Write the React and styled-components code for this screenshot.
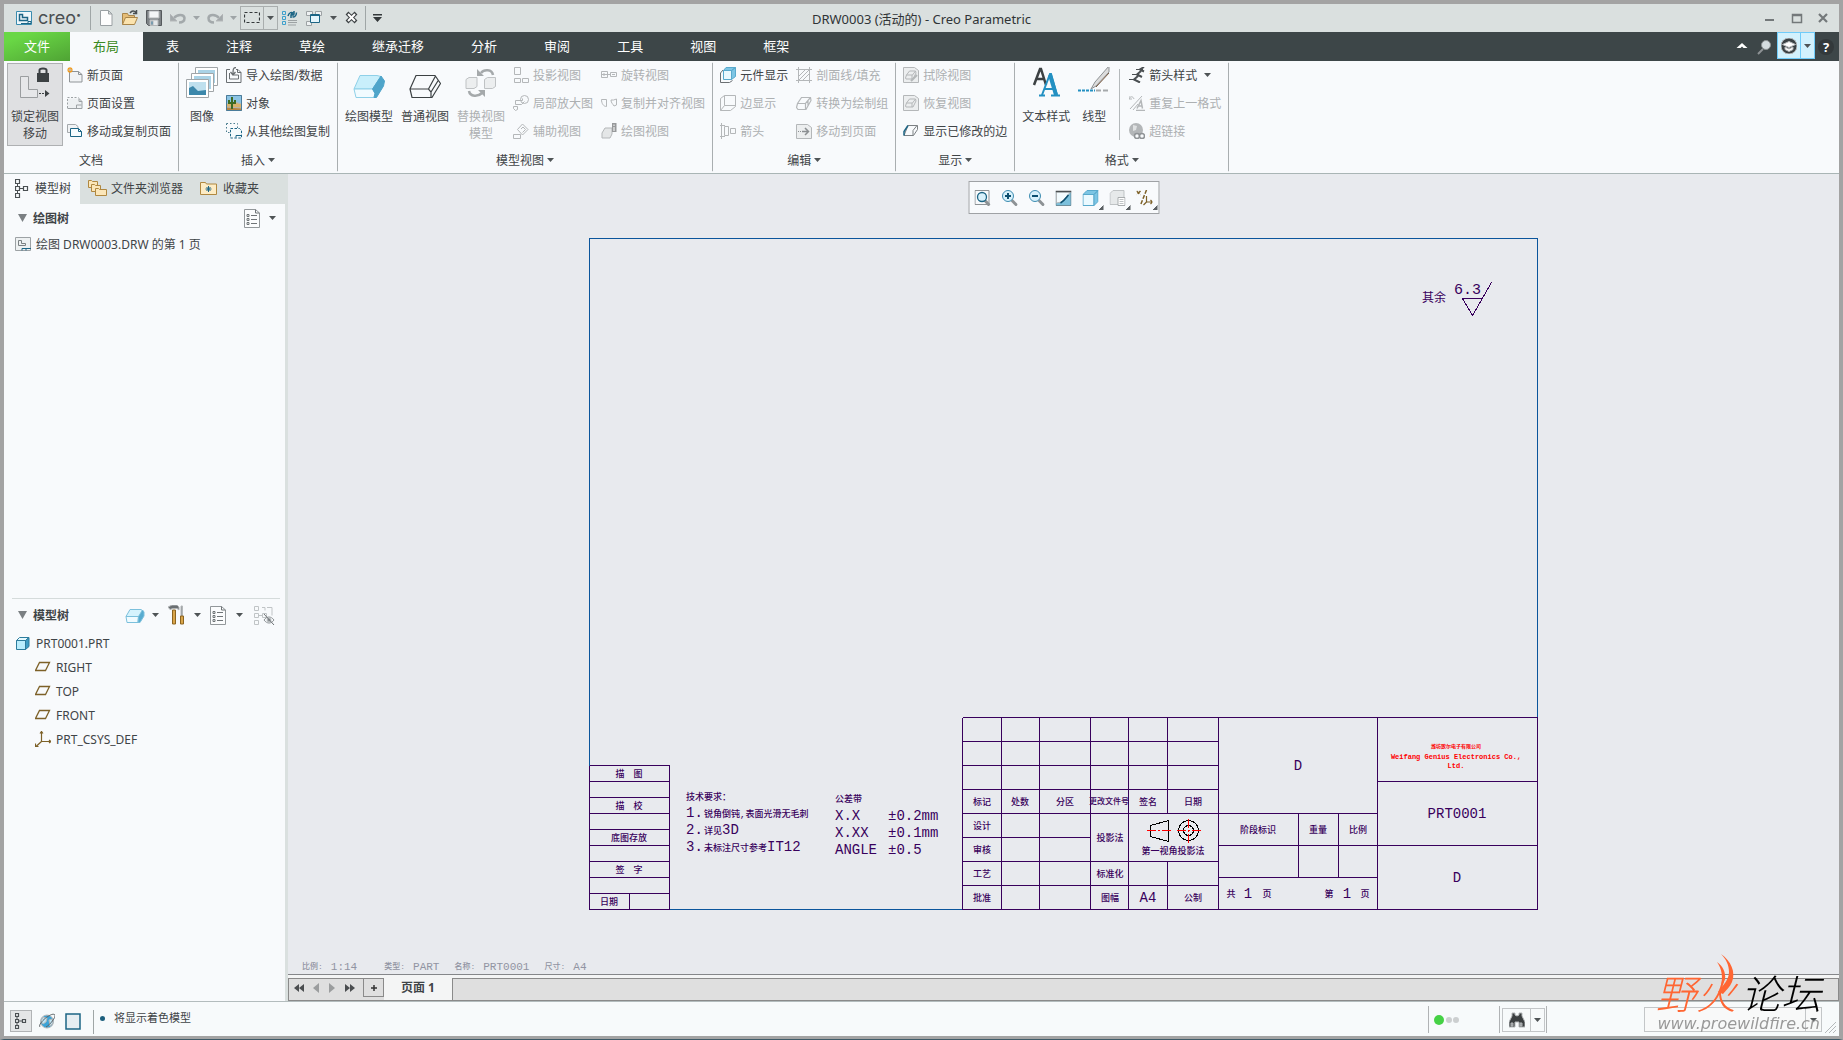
import React, { useState } from 'react';
import styled, { createGlobalStyle, css } from 'styled-components';

const GlobalStyle = createGlobalStyle`
  * {
    box-sizing: border-box;
  }
  body {
    margin: 0;
    font-family: 'Noto Sans', 'Noto Sans CJK SC', sans-serif;
    font-size: 12px;
    color: #3f4447;
  }
  button, input, select {
    font: inherit;
    color: inherit;
  }
  button {
    border: 0;
    padding: 0;
    background: none;
  }
  ul, h1, h2, p {
    margin: 0;
    padding: 0;
    list-style: none;
    font-size: inherit;
    font-weight: inherit;
  }
  svg {
    display: block;
    flex: none;
  }
`;

const Window = styled.div`
  height: 100vh;
  display: flex;
  flex-direction: column;
  border: 4px solid #a3a3a3;
  border-bottom: 1px solid #3e5a68;
  background: #f8fafc;
`;

/* ---------- title bar ---------- */

const TitleBar = styled.header`
  height: 28px;
  flex: none;
  display: grid;
  grid-template-columns: 1fr auto 1fr;
  align-items: center;
  background: #dae0df;
`;

const QuickAccess = styled.div`
  display: flex;
  align-items: center;
  padding-left: 12px;
`;

const Brand = styled.span`
  width: 47px;
  margin-left: 6px;
  font-family: Inter, sans-serif;
  font-size: 18px;
  line-height: 20px;
  color: #4a4f52;
  display: flex;

  sup {
    font-size: 9px;
    line-height: 14px;
  }
`;

const Rule = styled.span`
  width: 1px;
  height: 24px;
  background: #9fa6a6;
  margin-left: ${({ $left }) => $left || 5}px;
  margin-right: ${({ $right }) => $right || 5}px;
`;

const Tool = styled.button`
  width: ${({ $width }) => $width || 24}px;
  height: 24px;
  display: flex;
  align-items: center;
  justify-content: center;
`;

const SplitTool = styled.div`
  display: flex;
  border: 1px solid #a9aeae;

  button + button {
    border-left: 1px solid #a9aeae;
  }
  button {
    height: 22px;
  }
`;

const Title = styled.h1`
  font-size: 13px;
  color: #303436;
`;

const WindowButtons = styled.div`
  display: flex;
  justify-content: flex-end;
  padding-right: 4px;
`;

/* ---------- menu ---------- */

const MenuBar = styled.nav`
  height: 29px;
  flex: none;
  display: flex;
  background: #3d4648;
`;

const MenuTab = styled.button`
  padding: 0 24px 2px 23px;
  font-size: 13px;
  color: #fff;

  ${({ $kind }) =>
    $kind === 'file' &&
    css`
      padding: 0 20px 2px;
      background: linear-gradient(160deg, #69d745 20%, #4fa334);
    `}
  ${({ $kind }) =>
    $kind === 'active' &&
    css`
      background: #f8fafc;
      color: #3a8a22;
    `}
`;

const MenuEnd = styled.div`
  margin-left: auto;
  display: flex;
  align-items: center;
  padding-right: 2px;
`;

const Learning = styled.div`
  display: flex;
  height: 27px;
  align-self: flex-start;
  border: 1px solid #6fccfa;
  background: #d2f1fd;

  button {
    height: 25px;
  }
  button + button {
    border-left: 1px solid #6fccfa;
  }
`;

const HelpMark = styled.span`
  width: 16px;
  height: 16px;
  border-radius: 50%;
  background: #33393b;
  color: #fff;
  font-size: 13px;
  font-weight: 700;
  line-height: 16px;
`;

/* ---------- ribbon ---------- */

const Ribbon = styled.div`
  flex: none;
  height: 113px;
  display: flex;
  border-bottom: 1px solid #a9b5b5;
`;

const GroupBox = styled.section`
  padding: 0 3px;
  display: flex;
  flex-direction: column;
  border-right: 1px solid;
  border-image: linear-gradient(#f8fafc 2%, #a9aeb0 3%, #a9aeb0 97%, #f8fafc 98%) 1;
`;

const GroupBody = styled.div`
  display: flex;
  height: 85px;
`;

const GroupCaption = styled.div`
  height: 27px;
  display: flex;
  align-items: center;
  justify-content: center;
  gap: 3px;
`;

const InnerRule = styled.span`
  width: 1px;
  margin: 8px 5px 6px;
  background: #b4b9bb;
`;

const Column = styled.div`
  display: flex;
  flex-direction: column;
`;

const SmallButton = styled.button`
  height: 28px;
  padding: 0 4px;
  display: flex;
  align-items: center;
  gap: 4px;
  white-space: nowrap;
  color: ${({ disabled }) => (disabled ? '#adb0b2' : '#3f4447')};
`;

const BigButton = styled.button`
  height: 83px;
  margin-top: 2px;
  padding: 3px 3px 0;
  display: flex;
  flex-direction: column;
  align-items: center;
  gap: 9px;
  border: 1px solid ${({ $on }) => ($on ? '#aeb0b2' : 'transparent')};
  background: ${({ $on }) => ($on ? '#dfe0e2' : 'none')};
  line-height: 17px;
  white-space: pre-line;
  color: ${({ disabled }) => (disabled ? '#adb0b2' : '#3f4447')};
`;

/* ---------- main area ---------- */

const Main = styled.main`
  flex: 1;
  min-height: 0;
  display: flex;
`;

const Side = styled.aside`
  width: 284px;
  flex: none;
  display: flex;
  flex-direction: column;
  border-right: 3px solid #dae0df;
`;

const SideTabs = styled.div`
  height: 30px;
  flex: none;
  display: flex;
  margin-right: -3px;
  background: #dae0df;
`;

const SideTab = styled.button`
  display: flex;
  align-items: center;
  gap: ${({ $active }) => ($active ? 6 : 4)}px;
  padding: 0 9px 2px ${({ $active }) => ($active ? 11 : 8)}px;
  background: ${({ $active }) => ($active ? '#f8fafc' : 'none')};
`;

const Section = styled.section`
  flex: ${({ $flex }) => $flex};
  min-height: 0;
`;

const Divider = styled.div`
  height: 1px;
  flex: none;
  margin: 0 5px 0 8px;
  background: #d5dbdb;
`;

const SectionHead = styled.div`
  height: ${({ $height }) => $height}px;
  display: flex;
  align-items: center;
  padding-left: 14px;
  gap: 6px;
`;

const SectionTitle = styled.h2`
  font-weight: 700;
  flex: 1;
`;

const SectionTools = styled.div`
  display: flex;
  padding-right: ${({ $right }) => $right}px;
`;

const TreeItem = styled.li`
  height: 24px;
  display: flex;
  align-items: center;
  gap: 5px;
  padding-left: ${({ $level }) => ($level ? 31 : 11)}px;
`;

const Work = styled.div`
  flex: 1;
  min-width: 0;
  display: flex;
  flex-direction: column;
`;

const Canvas = styled.div`
  flex: 1;
  min-height: 0;
  position: relative;
  display: flex;
  align-items: center;
  justify-content: center;
  background: #e8eaee;
`;

const ViewTools = styled.div`
  position: absolute;
  top: 7px;
  left: 50%;
  transform: translateX(-50%);
  height: 33px;
  display: flex;
  align-items: center;
  border: 1px solid #9fa2a5;
  background: #f8fafc;
`;

const ViewTool = styled(Tool)`
  width: 27px;

  &:nth-child(n + 5) {
    background: linear-gradient(135deg, transparent 50%, #5b6063 50%) right 1px bottom 0 / 5px 5px no-repeat;
  }
`;

const SheetInfo = styled.p`
  position: absolute;
  left: 14px;
  bottom: 0;
  display: flex;
  gap: 15px;
  font: 11px/14px 'Liberation Mono', 'Noto Sans CJK SC', monospace;
  color: #9194a2;

  span {
    display: flex;
    gap: 8px;
  }
  span:first-child {
    padding-right: 12px;
  }
  b {
    font-size: 8px;
    font-weight: 500;
  }
`;

const Sheet = styled.svg`
  font-family: 'Liberation Mono', 'Noto Sans CJK SC', monospace;
  overflow: visible;
`;

const PageBar = styled.div`
  height: 27px;
  flex: none;
  display: flex;
  padding-top: 3px;
  border-top: 1px solid #85878a;
  background: #f4f5f5;
`;

const PageNav = styled.div`
  display: flex;
  border: 1px solid #8a8a8a;
  border-right: 0;
  background: #dfdfdf;

  button {
    height: 18px;
  }
`;

const AddPage = styled.button`
  width: 21px;
  margin-left: 4px;
  border: 1px solid #8a8a8a;
  border-top: 0;
  display: flex;
  align-items: center;
  justify-content: center;
`;

const PageTab = styled.button`
  padding: 0 17px 4px;
  border-bottom: 1px solid #8a8a8a;
  font-weight: 700;
`;

const PageFill = styled.div`
  flex: 1;
  border: 1px solid #8a8a8a;
  background: #dfdfdf;
`;

/* ---------- status bar ---------- */

const StatusBar = styled.footer`
  height: 38px;
  flex: none;
  display: flex;
  align-items: flex-start;
  padding: 8px 3px 0 6px;
  border-top: 1px solid #b3bcbd;
  border-bottom: 3px solid #a3a3a3;
  background: #f7fafb;
`;

const StatusToggle = styled.button`
  width: ${({ $on }) => ($on ? 22 : 26)}px;
  height: 22px;
  margin-right: ${({ $on }) => ($on ? 2 : 0)}px;
  display: flex;
  align-items: center;
  justify-content: center;
  border: 1px solid ${({ $on }) => ($on ? '#b0b3b5' : 'transparent')};
  background: ${({ $on }) => ($on ? '#e4e6e7' : 'none')};
`;

const Message = styled.p`
  flex: 1;
  display: flex;
  align-items: center;
  gap: 9px;
  font-size: 11px;
  line-height: 16px;

  &::before {
    content: '';
    width: 5px;
    height: 5px;
    border-radius: 50%;
    background: #1c5f7d;
  }
`;

const StatusCell = styled.div`
  height: 27px;
  margin-top: -4px;
  display: flex;
  align-items: center;
  border-left: 1px solid #b0b3b5;
  padding: 0 2px;
  width: ${({ $width }) => $width}px;
`;

const Finder = styled.div`
  display: flex;
  border: 1px solid #c3c6c8;

  button {
    height: 22px;
  }
  button + button {
    border-left: 1px solid #c3c6c8;
  }
`;

const FilterWrap = styled.label`
  width: 178px;
  height: 25px;
  margin-top: -3px;
  display: flex;
  align-items: center;
  border: 1px solid #c3c6c8;
  background: #f8f9f9;

  select {
    flex: 1;
    height: 100%;
    appearance: none;
    border: 0;
    border-right: 1px solid #c3c6c8;
    background: none;
  }
  svg {
    margin: 0 4px;
  }
`;

const Grip = styled.svg`
  align-self: flex-end;
  margin: 0 0 3px 3px;
`;

const Watermark = styled.div`
  position: fixed;
  right: 22px;
  bottom: 8px;
  display: flex;
  flex-direction: column;
  align-items: flex-end;
  pointer-events: none;
`;

const WatermarkName = styled.div`
  display: flex;
  gap: 5px;
  font-family: 'Noto Sans CJK SC', sans-serif;
  font-size: 40px;
  font-weight: 300;
  line-height: 46px;
  font-style: italic;
  color: #000;

  span {
    position: relative;
    color: #ff6633;
  }
  svg {
    position: absolute;
    right: -1px;
    top: -15px;
  }
`;

const WatermarkUrl = styled.div`
  font: italic 16px/17px 'DejaVu Sans', sans-serif;
  color: #999;
  padding-right: 1px;
`;

/* ---------- icons ---------- */

const G = '#b4b7b9';
const D = '#4a4f52';
const B = '#1c6585';

const shapes = {
  app: (
    <g fill="none" stroke={B}>
      <path d="M.5 1.500h15v13h-15z" fill="#eef7fb" stroke="#3b8cae" />
      <path d="M3.500 4.500v6h8v-3h-5v-3z" strokeWidth="1.500" />
      <path d="M5 13.500h10v-2h-3v2" stroke={B} />
    </g>
  ),
  newFile: <path d="M2.500 .5h8l3.500 3.500v11.500h-11.500zM10.500 .5v3.500h3.500" fill="#fdfdfd" stroke="#9aa0a3" />,
  open: (
    <g>
      <path d="M.5 14.500v-11h5l1 2h6v2" fill="#e5bd77" stroke="#a8854a" />
      <path d="M.5 14.500l3-7h12l-3 7z" fill="#fbe3ae" stroke="#a8854a" />
      <path d="M8 3c2-2.500 4-2.500 6-.5M14.500 0v3.500h-3.500" fill="none" stroke={D} strokeWidth="1.500" />
    </g>
  ),
  save: (
    <g>
      <path d="M.5 .5h15v15h-13l-2-2z" fill="#7d8285" stroke="#55595c" />
      <path d="M3 1h10v7h-10z" fill="#f3f5f6" />
      <path d="M4 10h8v5.500h-8z" fill="#e4e7e9" />
      <path d="M5 11h2v4h-2z" fill="#3c81a6" />
    </g>
  ),
  undo: (
    <g>
      <path d="M4 8c3-4 10-4 10.500 0 0 3-2 4.500-5.500 4.500" fill="none" stroke="#a3a9ab" strokeWidth="2.500" />
      <path d="M0 4v7h7z" fill="#a3a9ab" />
    </g>
  ),
  redo: (
    <g>
      <path d="M12 8c-3-4-10-4-10.500 0 0 3 2 4.500 5.500 4.500" fill="none" stroke="#a3a9ab" strokeWidth="2.500" />
      <path d="M16 4v7h-7z" fill="#a3a9ab" />
    </g>
  ),
  marquee: <path d="M.5 2.500h15v10h-15z" fill="none" stroke="#33383a" strokeWidth="1.200" strokeDasharray="3 2" />,
  regen: (
    <g fill="none">
      <path d="M.5 1.500h3v3h-3zM.5 6.500h3v3h-3zM.5 11.500h3v3h-3z" stroke="#3fa0cc" />
      <path d="M6 10.500h9M6 12.500h9M6 15h8" stroke="#9da2a4" />
      <path d="M6 6c1-4 4-4 5-3M12 1v3h-3M14.500 2.500c0 4-3 5-4 4M9 8v-3h3" stroke={B} strokeWidth="1.500" />
    </g>
  ),
  windows: (
    <g stroke="#9da2a4" fill="#eef1f2">
      <path d="M.5 1.500h6v4h-6zM9.500 1.500h6v4h-6zM.5 11.500h5v4h-5z" />
      <path d="M4.500 4.500h9v8h-9z" fill="#e5f5fc" stroke={B} />
      <path d="M4 5.500h10" stroke={B} />
    </g>
  ),
  closeWin: (
    <g fill="none">
      <path d="M3 3l9 9M12 3l-9 9" stroke="#3c4143" strokeWidth="4" />
      <path d="M4 4l7 7M11 4l-7 7" stroke="#fff" strokeWidth="2" />
    </g>
  ),
  customize: <path d="M4 4h9v1.500h-9zM4 7h9l-4.500 5z" fill="#33383a" />,
  min: <path d="M3 9h9v2h-9z" fill="#73787a" />,
  max: <path d="M3.500 4.500h9v8h-9zM3 5.500h10" fill="none" stroke="#73787a" strokeWidth="1.500" />,
  close: <path d="M4 4l8 8M12 4l-8 8" stroke="#73787a" strokeWidth="2.200" />,
  up: <path d="M2.500 9l5.500-5 5.500 5h-4l-1.500-1.500-1.500 1.500z" fill="#fff" />,
  find: (
    <g>
      <path d="M6 10l-5 5" stroke="#8d9294" strokeWidth="2" />
      <circle cx="9" cy="6" r="4.500" fill="#d4dcdf" stroke="#8d9294" />
    </g>
  ),
  learn: (
    <g>
      <circle cx="8" cy="8" r="8" fill="#3a4144" />
      <path d="M1.500 6.500l6.500-3 6.500 3-6.500 3z" fill="#fff" />
      <path d="M4 9l4 2 4-2v2.500l-4 2-4-2z" fill="#fff" />
    </g>
  ),
  newSheet: (
    <g>
      <path d="M2.500 4.500h9l3.500 3v7.500h-12.500z" fill="#f1f3f5" stroke="#8f9497" />
      <path d="M11.500 4.500v3h3.500" fill="none" stroke="#8f9497" />
      <path d="M3 0v6M0 3h6M1 1l4 4M5 1l-4 4" stroke="#ef9a1f" strokeWidth="1.200" />
      <path d="M2.500 2.500h1v1h-1z" fill="#fff" />
    </g>
  ),
  sheetSetup: (
    <g fill="none" stroke="#9da2a5">
      <path d="M4 3.500h8l3 3v7.500h-14.500v-10" fill="#edf0f2" stroke="none" />
      <path d="M.5 4v10M.5 2.500h11" strokeDasharray="2 1.500" />
      <path d="M.5 13.500h14.500v-7l-3-3v3h3M9.500 13v-3h5" />
    </g>
  ),
  copySheet: (
    <g>
      <path d="M.5 1.500h8l2.500 2v6h-10.500z" fill="#f1f3f5" stroke="#a4a9ac" />
      <path d="M3.500 5.500h8l3 3v5h-11z" fill="#f6fcff" stroke={B} />
      <path d="M11.500 5.500v3h3" fill="none" stroke={B} />
    </g>
  ),
  importDrawing: (
    <g fill="none" stroke="#6a6f72">
      <path d="M4 2.500h-3.500v13h14.500v-10l-3-3h-2M11.500 2.500v3h3.500" />
      <path d="M3.500 6v6h9v-4h-5" />
      <path d="M10 .5c-3 0-3 2-3 7M4.500 5l2.500 3 2.500-3" strokeWidth="1.300" />
    </g>
  ),
  object: (
    <g>
      <path d="M0 0h16v10h-16z" fill="#8cc4e4" />
      <path d="M0 9l8-2 8 2v7h-16z" fill="#d9b36c" />
      <path d="M0 12l16 1v3h-16z" fill="#b8863f" />
      <path d="M6 14v-12M3 5v3h3M9 5v3h-3" fill="none" stroke="#3e6b23" strokeWidth="2" />
      <path d="M.5 .5h15v15h-15z" fill="none" stroke="#4a7c9b" />
    </g>
  ),
  copyOther: (
    <g fill="none">
      <path d="M.5 .5h11v9h-11z" stroke="#4a7c8f" strokeDasharray="1.500 2" />
      <path d="M4.500 5.500h9l2 2v7.500h-11z" fill="#f3fafd" stroke={B} strokeDasharray="2.500 1.500" />
      <path d="M10 14.500v-2h5" stroke={B} />
    </g>
  ),
  projView: <path d="M1.500 .5h6v7h-6zM1.500 11.500h6v4h-6zM9.500 11.500h6v4h-6z" />,
  detailView: (
    <g>
      <circle cx="11.500" cy="4.500" r="4" />
      <path d="M2.500 5.500h7v-2M2.500 5.500v4h6l3-3M.5 11.500h4v3l-2 1-2-2z" />
    </g>
  ),
  auxView: <path d="M4.500 6.500l5-5.500 5.500 5.500-5.500 5.500zM8 6l2-2 2.500 2.500-3 3M.5 11.500h7v4h-7z" />,
  rotView: <path d="M.5 4.500h6v6h-6zM3 6v3M0 7.500h9M9.500 5.500h6v4h-6zM11 7.500h3" />,
  copyAlign: <path d="M.5 4.500h5v7c-3 0-5-3-5-7zM10 5c0 3 2 4 3 6l2.500-1v-6l-3 1z" />,
  drawView: (
    <g>
      <path d="M1 10l3-5h7v6l-2 4h-8z" fill="#e4e6e7" />
      <path d="M11 0h4.500v9h-4.500z" fill="#97999b" stroke="none" />
      <path d="M13 1.500v1.500M13 4v4" stroke="#fff" />
    </g>
  ),
  compShow: (
    <g>
      <path d="M3 3l-2.500 3v9.500h9l3-2" fill="none" stroke="#6a6f72" />
      <path d="M3.500 3.500h8v9h-8z" fill="#e9f8fe" stroke="#58a9cc" />
      <path d="M3.500 3.500l2.500-3h9.500l-4 3zM11.500 3.500l4-3v9l-4 3z" fill="#7cc5e4" stroke="#58a9cc" />
    </g>
  ),
  edgeShow: <path d="M.5 3.500v12h10l5-4v-11h-11zM4.500 .5v10h11M4.500 10.500l-4 5" />,
  arrows: <path d="M1.500 0v16M0 2.500h5M0 13.500h5M4.500 3.500h4v9h-4zM10.500 5.500h5v5h-5z" />,
  hatch: <path d="M2.500 0v16M13.500 0v16M0 2.500h16M0 13.500h16M3 9l6-6M3 13l10-10M7 13l6-6" />,
  toDraft: <path d="M.5 12.500l1-4 4-6h9l.5 3-5 9h-8zM1.500 8.500h8l5-6M9.500 8.500v5.500M12 6v5" strokeWidth="1.200" />,
  moveSheet: (
    <g>
      <path d="M.5 1.500h11l4 3v11h-15z" fill="#eceeef" />
      <path d="M2 8.500h4" stroke="#8b8f92" strokeDasharray="1 1" />
      <path d="M6 8.500h6M9 5l3.500 3.500-3.500 3.500" stroke="#8b8f92" strokeWidth="1.500" />
    </g>
  ),
  eraseView: (
    <g>
      <path d="M.5 .5h11l4 3v12h-15z" fill="#eceeef" />
      <path d="M2.500 11l1-3 3-4h6l.5 2-3 6h-7zM3.500 8h6l3-4M9 8v4" />
      <path d="M8 14l6-6" strokeWidth="2" />
    </g>
  ),
  resumeView: (
    <g>
      <path d="M.5 .5h11l4 3v12h-15z" fill="#eceeef" />
      <path d="M2.500 11l1-3 3-4h6l.5 2-3 6h-7zM3.500 8h6l3-4M9 8v4" />
    </g>
  ),
  modEdges: (
    <g fill="none">
      <path d="M5 2.500h9.500v4l-4 6h-9.500zM10 12.500v-5l4-5" stroke="#7b8083" />
      <path d="M5 2.500l-4 6v4" stroke={B} strokeWidth="1.500" />
    </g>
  ),
  arrowStyle: (
    <g fill="none" stroke={D}>
      <path d="M0 12.500h7M3 7.500h7M7 2.500h7" strokeWidth="1.200" />
      <path d="M9 9l-4 3.500 6 3M12 4l-4 3.500 5 2.500M15 0l-4 2.500 4 2" strokeWidth="2" />
    </g>
  ),
  repeat: (
    <g>
      <path d="M0 4c1-3 4-3 5 0M0 1v3h3M1 14l12-13M4 15l5-6" />
      <path d="M8 13.500l4-8 1.500 8M9 11h4M7 15.500h9" strokeWidth="1.500" />
    </g>
  ),
  link: (
    <g fill="#b3b6b8" stroke="none">
      <circle cx="7" cy="7" r="7" />
      <path d="M4 2l4 1-1 4-3 1z" fill="#dfe1e2" />
      <circle cx="8" cy="13" r="2.500" fill="#f8fafc" stroke="#8f9396" strokeWidth="1.500" />
      <circle cx="13" cy="13" r="2.500" fill="#f8fafc" stroke="#8f9396" strokeWidth="1.500" />
    </g>
  ),
  treeTab: (
    <g fill="none" stroke={D}>
      <path d="M.5 .5h4v4h-4zM.5 7.500h4v4h-4zM.5 14.500h4v4h-4zM8.500 7.500h4v4h-4z" strokeWidth="1.200" />
      <path d="M5 9.500h3M2.500 5v2M2.500 12v2" />
    </g>
  ),
  navigator: (
    <g fill="none" stroke={D}>
      <path d="M.5 .5h3v3h-3zM.5 6.500h3v3h-3zM.5 12.500h3v3h-3zM7.500 6.500h3v3h-3z" strokeWidth="1.200" />
      <path d="M4 8h3M2 4v2M2 10v2" />
    </g>
  ),
  folders: (
    <g stroke="#b08840" fill="#fbe6b9">
      <path d="M.5 8.500v-7h3l1 1h5v6z" />
      <path d="M3.500 12.500v-7h3l1 1h5v6z" />
      <path d="M7.500 16.500v-7h3l1 1h7v6z" />
    </g>
  ),
  favorites: (
    <g>
      <path d="M.5 14.500v-12h5l1 1.500h10v10.500z" fill="#fdecc5" stroke="#b08840" />
      <path d="M8.500 6v6M5.500 9h6M6.500 7l4 4M10.500 7l-4 4" stroke={B} />
    </g>
  ),
  list: (
    <g fill="none" stroke="#6f7477">
      <path d="M.5 .5h11l4 3.500v14.500h-15z" fill="#fbfcfd" stroke="#92979a" />
      <path d="M11.500 .5v3.500h4" />
      <path d="M7 6.500h6M7 10.500h6M7 14.500h6" />
      <path d="M3 5.500h2v2h-2zM3 9.500h2v2h-2zM3 13.500h2v2h-2z" />
    </g>
  ),
  drawing: (
    <g fill="none">
      <path d="M.5 1.500h15v13h-15z" fill="#eef1f2" stroke="#9da2a5" />
      <path d="M3.500 4.500v5h7v-2h-4v-3z" stroke="#7b8083" />
      <path d="M7 14.500v-2h9M11 12.500v2" stroke={B} />
    </g>
  ),
  block: (
    <g stroke="#7cc0dc">
      <path d="M1 9.500l4-7h11l2 1.500-4 5.500z" fill="#d5f3fd" />
      <path d="M1 9.500h12.500l-.5 6h-11z" fill="#f0fbff" />
      <path d="M13.500 9.500l4-6.500 1.500 2v4l-4 6.500h-2z" fill="#58acd0" />
    </g>
  ),
  tools: (
    <g>
      <path d="M0 2l4-2h5l2 2v3l-2-1.500h-4l-3 1z" fill="#6a6f72" />
      <path d="M4.500 5h3v14h-3z" fill="#d9a54a" stroke="#8c6420" />
      <path d="M13 1h1.500v10h-1.500z" fill="#8d9295" />
      <path d="M12.500 11h3v8h-3z" fill="#d9a54a" stroke="#8c6420" />
    </g>
  ),
  hideTree: (
    <g fill="none" stroke="#c0c4c6">
      <path d="M.5 1.500h4v4h-4zM.5 8.500h4v4h-4zM.5 15.500h4v4h-4zM8.500 8.500h4v4h-4zM5 10.500h4M8 2.500h3v3M13 2.500h5v8" />
      <path d="M10 15c3-4 7-4 10 0-3 4-7 4-10 0z" stroke="#8d9295" />
      <circle cx="15" cy="15" r="2" fill="#8d9295" />
      <path d="M10 9l10 11" stroke="#6f7477" />
    </g>
  ),
  part: (
    <g stroke="#2d7c9d">
      <path d="M1.500 5.500h9v9h-9z" fill="#b9edfd" />
      <path d="M1.500 5.500l3-3h9.500l-3.500 3z" fill="#e4f9ff" />
      <path d="M10.500 5.500l3.500-3v9l-3.500 3z" fill="#3d9cc4" />
    </g>
  ),
  plane: <path d="M4.500 3.500h10l-4 8h-10z" fill="none" stroke="#7d6128" strokeWidth="1.300" />,
  csys: (
    <g fill="none" stroke="#7d6128" strokeWidth="1.200">
      <path d="M6.500 1v9.500h9M6.500 10.500l-5.500 5" />
      <path d="M5 2.500l1.500-2 1.500 2M14 9l2 1.500-2 1.500M.5 12.500v3h3" />
    </g>
  ),
  zoomFit: (
    <g fill="none">
      <path d="M.5 .5h14v14h-14z" stroke="#8d9295" />
      <path d="M10 10l5 5.500" stroke="#8d9295" strokeWidth="3" />
      <circle cx="7.500" cy="7" r="4.500" fill="#d8f1fb" stroke={B} strokeWidth="1.300" />
    </g>
  ),
  zoomIn: (
    <g fill="none">
      <path d="M10 10l5.500 5.500" stroke="#8d9295" strokeWidth="3" />
      <circle cx="6.500" cy="6" r="5.500" fill="#d8f1fb" stroke="#3c8bb0" />
      <path d="M3.500 6h6M6.500 3v6" stroke="#0b4f70" strokeWidth="2" />
    </g>
  ),
  zoomOut: (
    <g fill="none">
      <path d="M10 10l5.500 5.500" stroke="#8d9295" strokeWidth="3" />
      <circle cx="6.500" cy="6" r="5.500" fill="#d8f1fb" stroke="#3c8bb0" />
      <path d="M3.500 6h6" stroke="#0b4f70" strokeWidth="2" />
    </g>
  ),
  repaint: (
    <g>
      <path d="M.5 1.500h15v14h-15z" fill="#7cc0dc" stroke="#6f8f9c" />
      <path d="M1 2h14l-9 10-5 1z" fill="#f3fbfe" />
      <path d="M0 1.500h16" stroke={D} strokeWidth="1.500" />
      <path d="M13 5c-2 2-3 5-8 8" fill="none" stroke="#0b4f70" strokeWidth="1.500" />
    </g>
  ),
  shaded: (
    <g>
      <path d="M.5 4.500h11v11h-11z" fill="#eaf9ff" stroke="#58a9cc" />
      <path d="M.5 4.500l4-4h11l-4 4zM11.500 4.500l4-4v11l-4 4z" fill="#7cc5e4" stroke="#58a9cc" />
    </g>
  ),
  savedViews: (
    <g stroke="#bfc3c5" fill="#e6e9ea">
      <path d="M.5 3.500l3-3h11v10l-4 4h-10z" />
      <path d="M8.500 7.500h7v8h-7z" fill="#fff" stroke="#a9adaf" />
      <path d="M10 9.500h4M10 11.500h4M10 13.500h4" />
    </g>
  ),
  datum: (
    <g fill="none" stroke="#7d6128" strokeWidth="1.500">
      <path d="M0 1l4 4M4 1l-4 4M10 0l-6 15" strokeDasharray="4 1.500" />
      <path d="M10 6v6h6M10 12l-3 3M14 10l2 2-2 2" strokeWidth="1.200" />
    </g>
  ),
  first: <path d="M8 4v8l-5-4zM13 4v8l-5-4z" fill="#4a4d4f" />,
  prev: <path d="M11 3v10l-6-5z" fill="#9b9d9e" />,
  next: <path d="M5 3v10l6-5z" fill="#9b9d9e" />,
  last: <path d="M3 4v8l5-4zM8 4v8l5-4z" fill="#4a4d4f" />,
  plus: <path d="M8 5v6M5 8h6" stroke="#333" strokeWidth="1.500" />,
  web: (
    <g>
      <circle cx="8" cy="8.500" r="6.500" fill="#3ba4d8" />
      <path d="M4 4l4 1-1 4-3 2-2-3zM10 7l3-1 1 4-3 3z" fill="#bfe6f6" />
      <path d="M1 14c-3-3 12-16 15-12 1 2-5 10-9 12" fill="none" stroke="#5e6467" />
    </g>
  ),
  fullscreen: <path d="M1 1h14v15h-14z" fill="#e6eef2" stroke={B} strokeWidth="1.500" />,
  binoculars: (
    <g>
      <path d="M3 1h3v2l2 1 2-1v-2h3v3l3 6v5h-6v-5h-4v5h-6v-5l3-6z" fill="#3b3f41" />
      <path d="M2 11h2v3h-2zM11 11h2v3h-2z" fill="#8d9295" />
    </g>
  ),
};

const Icon = ({ name, w = 16, h = 16 }) => (
  <svg width={w} height={h} viewBox={`0 0 ${w} ${h}`} fill="none" stroke={shapes[name].type === 'path' && shapes[name].props.fill ? 'none' : G} aria-hidden="true">
    {shapes[name]}
  </svg>
);

const Caret = ({ color = '#4f5456' }) => (
  <svg width="7" height="4" viewBox="0 0 7 4" aria-hidden="true">
    <path d="M0 0h7l-3.500 4z" fill={color} />
  </svg>
);

const bigShapes = {
  lock: (
    <g fill="none">
      <path d="M1.500 9.500h8v13h9v8h-17z" fill="#e6e7e9" stroke="#9b9ea0" />
      <path d="M18 6h12v9h-12z" fill="#3c4143" />
      <path d="M20.500 6v-3c0-2 7-2 7 0v3" stroke="#3c4143" strokeWidth="2" />
      <path d="M20 26.500h7" stroke="#3c4143" strokeDasharray="2 1" />
      <path d="M26 23l4.500 3.500-4.500 3.500z" fill="#3c4143" />
    </g>
  ),
  images: (
    <g stroke="#a0a5a8">
      <path d="M9.500 .5h22v18h-22z" fill="#fff" />
      <path d="M12 3h17v13h-17z" fill="#a9d2e6" stroke="none" />
      <path d="M5.500 6.500h22v18h-22z" fill="#fff" />
      <path d="M8 9h17v13h-17z" fill="#a9d2e6" stroke="none" />
      <path d="M.5 12.500h22v18h-22z" fill="#fff" />
      <path d="M3 15h17v13h-17z" fill="#bfe0ee" stroke="none" />
      <path d="M3 21l4-2 5 5 8-1v5h-17z" fill="#3d88ab" stroke="none" />
    </g>
  ),
  model: (
    <g stroke="#8fd0e8">
      <path d="M1 22l6-13.500h17l4 1-8.500 12.500z" fill="#c9effb" />
      <path d="M1 22h18.500l2.500 4-1 4.500h-18z" fill="#f1fbff" />
      <path d="M19.500 22l8.500-13 3.500 5-1 5-7 11.500h-2.500l1-4z" fill="#4fa5ca" stroke="#4fa5ca" />
    </g>
  ),
  general: (
    <path
      d="M1 22l6-13.500h19l5.500 8-8.500 14h-20zM1 22h18.500l2.500 3v5M19.500 22l7-13M22 25l7.500-12"
      fill="none"
      stroke="#3c4143"
      strokeWidth="1.200"
    />
  ),
  replace: (
    <g fill="#eceeef" stroke="#bfc2c4">
      <path d="M1 12.500l3-2h8v9l-3 2h-8zM19.500 12.500l3-2h8v9l-3 2h-8z" />
      <path d="M28 8c-1-6-9-6-12-2M4 24c1 6 9 6 13 2" fill="none" stroke="#a5a9ab" strokeWidth="2.500" />
      <path d="M12 2v7h7zM20 30v-7h-7z" fill="#a5a9ab" stroke="none" />
    </g>
  ),
  textStyle: (
    <g fill="none">
      <path d="M4 18l6-16h1l5 16M6 12h9" stroke="#3c4143" strokeWidth="2.500" />
      <path d="M12 28l8-21h1l6 21M14 22h11M9 28.500h6M21 28.500h9" stroke="#2390c2" strokeWidth="2" />
      <path d="M20 8l6 20" stroke="#2390c2" strokeWidth="4" />
    </g>
  ),
  lineStyle: (
    <g>
      <path d="M13 22l4-7 14-16v6l-13 14z" fill="#dcdcdc" stroke="#8d9194" />
      <path d="M18 20l13-14" stroke="#7a5a40" />
      <path d="M0 23.500h17" stroke="#2390c2" strokeWidth="2" strokeDasharray="3 1" />
      <path d="M18 23.500h14" stroke="#a5a9ab" strokeWidth="2" strokeDasharray="5 2" />
    </g>
  ),
};

const BigIcon = ({ name }) => (
  <svg width="32" height="32" viewBox="0 0 32 32" aria-hidden="true">
    {bigShapes[name]}
  </svg>
);

/* ---------- data ---------- */

const tabs = ['表', '注释', '草绘', '继承迁移', '分析', '审阅', '工具', '视图', '框架'];

const groups = [
  {
    caption: '文档',
    big: [{ icon: 'lock', label: '锁定视图\n移动', on: true }],
    columns: [[['newSheet', '新页面'], ['sheetSetup', '页面设置'], ['copySheet', '移动或复制页面']]],
  },
  {
    caption: '插入',
    menu: true,
    big: [{ icon: 'images', label: '图像' }],
    columns: [[['importDrawing', '导入绘图/数据'], ['object', '对象'], ['copyOther', '从其他绘图复制']]],
  },
  {
    caption: '模型视图',
    menu: true,
    big: [
      { icon: 'model', label: '绘图模型' },
      { icon: 'general', label: '普通视图' },
      { icon: 'replace', label: '替换视图\n模型', off: true },
    ],
    columns: [
      [['projView', '投影视图', 1], ['detailView', '局部放大图', 1], ['auxView', '辅助视图', 1]],
      [['rotView', '旋转视图', 1], ['copyAlign', '复制并对齐视图', 1], ['drawView', '绘图视图', 1]],
    ],
  },
  {
    caption: '编辑',
    menu: true,
    big: [],
    columns: [
      [['compShow', '元件显示'], ['edgeShow', '边显示', 1], ['arrows', '箭头', 1]],
      [['hatch', '剖面线/填充', 1], ['toDraft', '转换为绘制组', 1], ['moveSheet', '移动到页面', 1]],
    ],
  },
  {
    caption: '显示',
    menu: true,
    big: [],
    columns: [[['eraseView', '拭除视图', 1], ['resumeView', '恢复视图', 1], ['modEdges', '显示已修改的边']]],
  },
  {
    caption: '格式',
    menu: true,
    split: true,
    big: [
      { icon: 'textStyle', label: '文本样式' },
      { icon: 'lineStyle', label: '线型' },
    ],
    columns: [[['arrowStyle', '箭头样式', 0, 1], ['repeat', '重复上一格式', 1], ['link', '超链接', 1]]],
  },
];

const viewTools = ['zoomFit', 'zoomIn', 'zoomOut', 'repaint', 'shaded', 'savedViews', 'datum'];

const INK = '#38005c';
const FRAME = '#0b559c';

// title block rules: [x1, y1, x2, y2]
const inkLines = [
  [0, 527, 80, 527], [0, 543, 80, 543], [0, 559, 80, 559], [0, 575, 80, 575], [0, 591, 80, 591],
  [0, 607, 80, 607], [0, 623, 80, 623], [0, 639, 80, 639], [0, 655, 80, 655], [0, 671, 80, 671],
  [0, 527, 0, 671], [80, 527, 80, 671], [40, 655, 40, 671],
  [373, 479, 948, 479], [373, 503, 629, 503], [373, 527, 629, 527], [373, 551, 629, 551],
  [373, 575, 788, 575], [373, 599, 501, 599], [373, 623, 629, 623], [373, 647, 629, 647],
  [373, 671, 948, 671], [788, 543, 948, 543], [629, 607, 948, 607], [629, 639, 788, 639],
  [373, 479, 373, 671], [412, 479, 412, 671], [450, 479, 450, 671], [501, 479, 501, 671],
  [539, 479, 539, 671], [578, 479, 578, 575], [578, 623, 578, 671], [629, 479, 629, 671],
  [709, 575, 709, 639], [749, 575, 749, 639], [788, 479, 788, 671], [948, 479, 948, 671],
];

// centred labels: [text, x, y of the middle]
const labels = [
  ['描　图', 40, 535], ['描　校', 40, 567], ['底图存放', 40, 599], ['签　字', 40, 631], ['日期', 20, 663],
  ['标记', 393, 563], ['处数', 431, 563], ['分区', 476, 563], ['签名', 559, 563], ['日期', 604, 563],
  ['设计', 393, 587], ['审核', 393, 611], ['工艺', 393, 635], ['批准', 393, 659],
  ['投影法', 521, 599], ['标准化', 521, 635], ['图幅', 521, 659], ['公制', 604, 659],
  ['第一视角投影法', 584, 612], ['阶段标识', 669, 591], ['重量', 729, 591], ['比例', 769, 591],
  ['共', 642, 655], ['页', 678, 655], ['第', 740, 655], ['页', 776, 655],
];

const values = [
  ['D', 709, 527], ['D', 868, 639], ['PRT0001', 868, 575], ['A4', 559, 659], ['1', 659, 655], ['1', 758, 655],
];

const tolerances = [['X.X', '±0.2mm', 582], ['X.XX', '±0.1mm', 599], ['ANGLE', '±0.5', 616]];

function DrawingSheet() {
  return (
    <Sheet width="949" height="672" viewBox="0 0 949 672">
      <g transform="translate(.5 .5)" shapeRendering="crispEdges" fill="none">
        <path d="M0 0H948V671H0Z" stroke={FRAME} />
        {inkLines.map(([x1, y1, x2, y2], i) => (
          <line key={i} x1={x1} y1={y1} x2={x2} y2={y2} stroke={INK} />
        ))}
        <path d="M561 587L579 582V603L561 598Z" stroke="#000" />
        <circle cx="599" cy="592" r="10" stroke="#000" />
        <circle cx="599" cy="592" r="5" stroke="#000" />
        <path d="M557 592H583M587 592H612M599 580V605" stroke="red" strokeDasharray="9 2 2 2" />
        <path d="M902 44L883 77L873 60H893" stroke={INK} />
      </g>

      <g fill={INK} fontSize="9" fontWeight="500" textAnchor="middle">
        {labels.map(([text, x, y]) => (
          <text key={text + x + y} x={x} y={y + 4}>{text}</text>
        ))}
        <text x="520" y="566" fontSize="8">更改文件号</text>
      </g>

      <g fill={INK} fontSize="14" textAnchor="middle">
        {values.map(([text, x, y]) => (
          <text key={text + x} x={x} y={y + 5}>{text}</text>
        ))}
      </g>

      <g fill={INK} fontSize="9" fontWeight="500">
        <text x="97" y="562">技术要求：</text>
        <text x="97" y="579">
          <tspan fontSize="14" fontWeight="400">1.</tspan>
          <tspan x="115">锐角倒钝,表面光滑无毛刺</tspan>
        </text>
        <text x="97" y="596">
          <tspan fontSize="14" fontWeight="400">2.</tspan>
          <tspan x="115">详见</tspan>
          <tspan fontSize="14" fontWeight="400">3D</tspan>
        </text>
        <text x="97" y="613">
          <tspan fontSize="14" fontWeight="400">3.</tspan>
          <tspan x="115">未标注尺寸参考</tspan>
          <tspan fontSize="14" fontWeight="400">IT12</tspan>
        </text>
        <text x="246" y="564">公差带</text>
        {tolerances.map(([name, value, y]) => (
          <text key={name} y={y} fontSize="14" fontWeight="400">
            <tspan x="246">{name}</tspan>
            <tspan x="299">{value}</tspan>
          </text>
        ))}
      </g>

      <g fill={INK}>
        <text x="833" y="64" fontSize="12">其余</text>
        <text x="865" y="56" fontSize="15">6.3</text>
      </g>

      <g fill="red" fontSize="7" fontWeight="700" textAnchor="middle">
        <text x="867" y="510" fontSize="5">潍坊歌尔电子有限公司</text>
        <text x="867" y="521">Weifang Genius Electronics Co.,</text>
        <text x="867" y="530">Ltd.</text>
      </g>
    </Sheet>
  );
}

function RibbonGroup({ group }) {
  return (
    <GroupBox>
      <GroupBody>
        {group.big.map((b) => (
          <BigButton key={b.label} $on={b.on} disabled={b.off}>
            <BigIcon name={b.icon} />
            {b.label}
          </BigButton>
        ))}
        {group.split && <InnerRule />}
        {group.columns.map((rows, i) => (
          <Column key={i}>
            {rows.map(([icon, label, off, menu]) => (
              <SmallButton key={label} disabled={!!off}>
                <Icon name={icon} />
                {label}
                {menu ? <>&nbsp;<Caret /></> : null}
              </SmallButton>
            ))}
          </Column>
        ))}
      </GroupBody>
      <GroupCaption>
        {group.caption}
        {group.menu && <Caret />}
      </GroupCaption>
    </GroupBox>
  );
}

const Fold = () => (
  <svg width="9" height="8" viewBox="0 0 9 8" aria-hidden="true">
    <path d="M0 0h9l-4.500 8z" fill="#7b8083" />
  </svg>
);

export default function App() {
  const [sheetsOpen, setSheetsOpen] = useState(true);
  const [treeOpen, setTreeOpen] = useState(true);

  return (
    <>
      <GlobalStyle />
      <Window>
        <TitleBar>
          <QuickAccess>
            <Icon name="app" />
            <Brand>creo<sup>•</sup></Brand>
            <Rule $left={5} $right={3} />
            <Tool aria-label="新建"><Icon name="newFile" /></Tool>
            <Tool aria-label="打开"><Icon name="open" /></Tool>
            <Tool aria-label="保存"><Icon name="save" /></Tool>
            <Tool aria-label="撤消"><Icon name="undo" /></Tool>
            <Tool $width={13} aria-label="撤消列表"><Caret color="#9fa5a7" /></Tool>
            <Tool aria-label="重做"><Icon name="redo" /></Tool>
            <Tool $width={13} aria-label="重做列表"><Caret color="#9fa5a7" /></Tool>
            <SplitTool>
              <Tool $width={22} aria-label="选择"><Icon name="marquee" /></Tool>
              <Tool $width={14} aria-label="选择方式"><Caret /></Tool>
            </SplitTool>
            <Tool aria-label="重新生成"><Icon name="regen" /></Tool>
            <Tool aria-label="窗口"><Icon name="windows" /></Tool>
            <Tool $width={14} aria-label="窗口列表"><Caret /></Tool>
            <Tool $width={24} aria-label="关闭窗口"><Icon name="closeWin" /></Tool>
            <Rule $left={1} $right={1} />
            <Tool $width={20} aria-label="自定义"><Icon name="customize" /></Tool>
          </QuickAccess>
          <Title>DRW0003 (活动的) - Creo Parametric</Title>
          <WindowButtons>
            <Tool $width={27} aria-label="最小化"><Icon name="min" /></Tool>
            <Tool $width={27} aria-label="最大化"><Icon name="max" /></Tool>
            <Tool $width={25} aria-label="关闭"><Icon name="close" /></Tool>
          </WindowButtons>
        </TitleBar>

        <MenuBar>
          <MenuTab $kind="file">文件</MenuTab>
          <MenuTab $kind="active">布局</MenuTab>
          {tabs.map((t) => (
            <MenuTab key={t}>{t}</MenuTab>
          ))}
          <MenuEnd>
            <Tool $width={22} aria-label="收起"><Icon name="up" /></Tool>
            <Tool aria-label="搜索"><Icon name="find" /></Tool>
            <Learning>
              <Tool $width={22} aria-label="学习"><Icon name="learn" /></Tool>
              <Tool $width={14} aria-label="学习列表"><Caret /></Tool>
            </Learning>
            <Tool $width={22} aria-label="帮助"><HelpMark>?</HelpMark></Tool>
          </MenuEnd>
        </MenuBar>

        <Ribbon>
          {groups.map((g) => (
            <RibbonGroup key={g.caption} group={g} />
          ))}
        </Ribbon>

        <Main>
          <Side>
            <SideTabs>
              <SideTab $active><Icon name="treeTab" w={14} h={19} />模型树</SideTab>
              <SideTab><Icon name="folders" w={19} h={18} />文件夹浏览器</SideTab>
              <SideTab><Icon name="favorites" w={19} />收藏夹</SideTab>
            </SideTabs>
            <Section $flex="0 0 394px">
              <SectionHead $height={28}>
                <button aria-label="展开绘图树" onClick={() => setSheetsOpen(!sheetsOpen)}><Fold /></button>
                <SectionTitle>绘图树</SectionTitle>
                <SectionTools $right={5}>
                  <Tool aria-label="设置"><Icon name="list" h={19} /></Tool>
                  <Tool $width={16} aria-label="设置列表"><Caret /></Tool>
                </SectionTools>
              </SectionHead>
              {sheetsOpen && (
                <ul>
                  <TreeItem><Icon name="drawing" />绘图 DRW0003.DRW 的第 1 页</TreeItem>
                </ul>
              )}
            </Section>
            <Divider />
            <Section $flex="1">
              <SectionHead $height={32}>
                <button aria-label="展开模型树" onClick={() => setTreeOpen(!treeOpen)}><Fold /></button>
                <SectionTitle>模型树</SectionTitle>
                <SectionTools $right={3}>
                  <Tool $width={26} aria-label="模型"><Icon name="block" w={20} h={17} /></Tool>
                  <Tool $width={14} aria-label="模型列表"><Caret /></Tool>
                  <Tool $width={28} aria-label="工具"><Icon name="tools" w={17} h={20} /></Tool>
                  <Tool $width={14} aria-label="工具列表"><Caret /></Tool>
                  <Tool $width={28} aria-label="设置"><Icon name="list" h={19} /></Tool>
                  <Tool $width={14} aria-label="设置列表"><Caret /></Tool>
                  <Tool $width={36} aria-label="隐藏"><Icon name="hideTree" w={21} h={21} /></Tool>
                </SectionTools>
              </SectionHead>
              {treeOpen && (
                <ul>
                  <TreeItem><Icon name="part" />PRT0001.PRT</TreeItem>
                  <TreeItem $level={1}><Icon name="plane" />RIGHT</TreeItem>
                  <TreeItem $level={1}><Icon name="plane" />TOP</TreeItem>
                  <TreeItem $level={1}><Icon name="plane" />FRONT</TreeItem>
                  <TreeItem $level={1}><Icon name="csys" />PRT_CSYS_DEF</TreeItem>
                </ul>
              )}
            </Section>
          </Side>

          <Work>
            <Canvas>
              <DrawingSheet />
              <ViewTools>
                {viewTools.map((name) => (
                  <ViewTool key={name} aria-label={name}><Icon name={name} /></ViewTool>
                ))}
              </ViewTools>
              <SheetInfo>
                <span><b>比例:</b>1:14</span>
                <span><b>类型:</b>PART</span>
                <span><b>名称:</b>PRT0001</span>
                <span><b>尺寸:</b>A4</span>
              </SheetInfo>
            </Canvas>
            <PageBar>
              <PageNav>
                <Tool $width={19} aria-label="第一页"><Icon name="first" /></Tool>
                <Tool $width={16} aria-label="上一页"><Icon name="prev" /></Tool>
                <Tool $width={16} aria-label="下一页"><Icon name="next" /></Tool>
                <Tool $width={19} aria-label="最后一页"><Icon name="last" /></Tool>
                <AddPage aria-label="添加页面"><Icon name="plus" /></AddPage>
              </PageNav>
              <PageTab>页面 1</PageTab>
              <PageFill />
            </PageBar>
          </Work>
        </Main>

        <StatusBar>
          <StatusToggle $on aria-label="导航器"><Icon name="navigator" w={12} /></StatusToggle>
          <StatusToggle aria-label="浏览器"><Icon name="web" /></StatusToggle>
          <StatusToggle aria-label="全屏"><Icon name="fullscreen" h={17} /></StatusToggle>
          <Rule $left={7} $right={6} />
          <Message>将显示着色模型</Message>
          <StatusCell $width={71}>
            <svg width="30" height="12" viewBox="0 0 30 12">
              <circle cx="8" cy="6" r="5" fill="#45d145" />
              <circle cx="18" cy="6" r="3" fill="#cccfd0" />
              <circle cx="25" cy="6" r="3" fill="#cccfd0" />
            </svg>
          </StatusCell>
          <StatusCell $width={47}>
            <Finder>
              <Tool $width={27} aria-label="查找"><Icon name="binoculars" /></Tool>
              <Tool $width={14} aria-label="查找列表"><Caret /></Tool>
            </Finder>
          </StatusCell>
          <StatusCell $width={98} />
          <FilterWrap>
            <select aria-label="过滤器" defaultValue="">
              <option value="" />
            </select>
            <Caret />
          </FilterWrap>
          <Grip width="11" height="11" viewBox="0 0 11 11" stroke="#b5b9bb">
            <path d="M0 11L11 0M4 11L11 4M8 11L11 8" />
          </Grip>
        </StatusBar>

        <Watermark>
          <WatermarkName>
            <span>
              野火
              <svg width="24" height="42" viewBox="0 0 24 42">
                <path d="M8 0c10 7 15 18 11 28c-2 5-6 8-9 12l-5-2c5-7 11-12 11-20c0-7-3-13-8-18z" fill="#ff6633" />
                <path d="M4 8c6 4 9 11 8 17c-1 3-2 5-4 7c2-9 1-17-4-24z" fill="#ff6633" />
              </svg>
            </span>
            论坛
          </WatermarkName>
          <WatermarkUrl>www.proewildfire.cn</WatermarkUrl>
        </Watermark>
      </Window>
    </>
  );
}
